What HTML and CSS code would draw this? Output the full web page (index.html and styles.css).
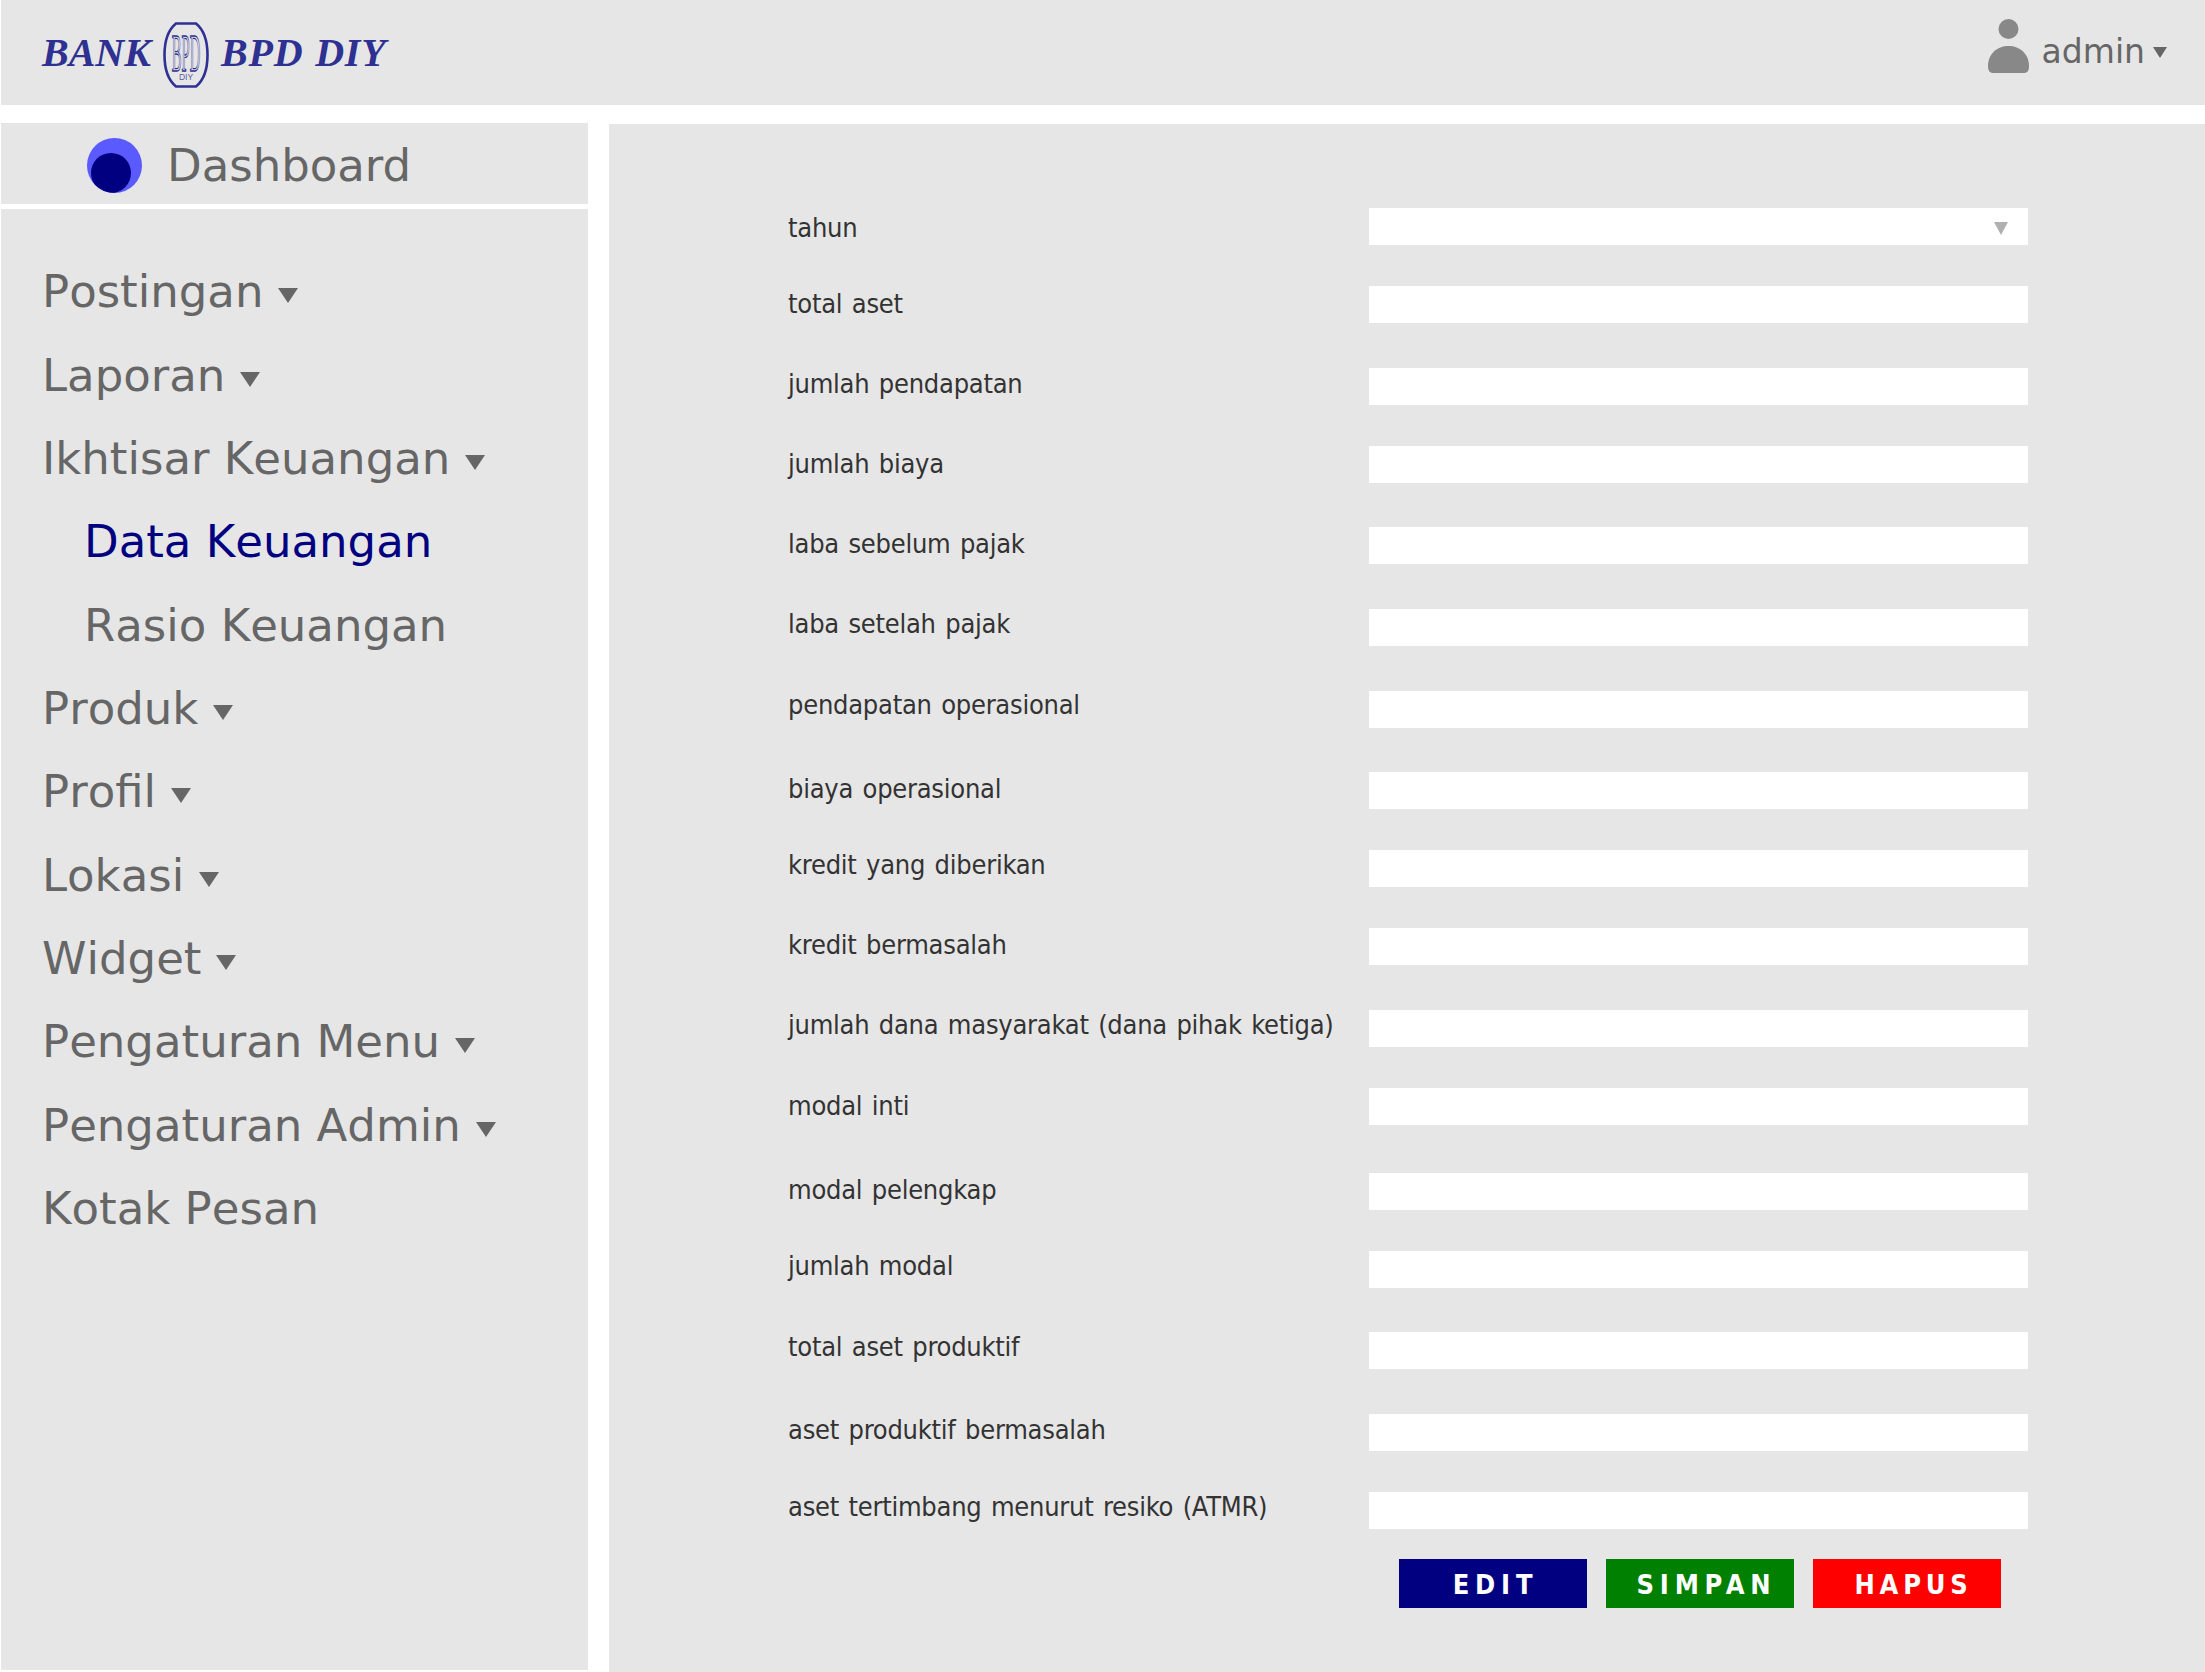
FILE: index.html
```html
<!DOCTYPE html>
<html lang="en">
<head>
  <meta charset="UTF-8">
  <title>Data Keuangan</title>
  <link rel="stylesheet" href="styles.css">
</head>
<body>
  <header class="topbar">
    <div class="logo">
      <span class="logo-word">BANK</span>
      <svg class="logo-mark" viewBox="0 0 46 66" width="46" height="66">
        <path d="M13 1.5 H33 C41 8 44.5 20 44.5 33 C44.5 46 41 58 33 64.5 H13 C5 58 1.5 46 1.5 33 C1.5 20 5 8 13 1.5 Z" fill="none" stroke="#2e3192" stroke-width="2.6"/>
        <text transform="translate(23 49) scale(.28 1)" text-anchor="middle" font-family="Liberation Serif" font-size="52" fill="none" stroke="#2e3192" stroke-width="1" vector-effect="non-scaling-stroke">BPD</text>
        <text x="23" y="58" text-anchor="middle" font-family="Liberation Sans" font-size="8.5" fill="#5a5ca8">DIY</text>
      </svg>
      <span class="logo-word logo-name">BPD DIY</span>
    </div>
    <div class="user">
      <svg class="user-icon" viewBox="0 0 41 54" width="41" height="54">
        <circle cx="20.5" cy="10" r="10" fill="#888"/>
        <path d="M0 47 C0 35 9 27 20.5 27 C32 27 41 35 41 47 C41 52 39 54 36 54 H5 C2 54 0 52 0 47 Z" fill="#888"/>
      </svg>
      <span class="user-name">admin</span>
      <span class="caret caret-user"></span>
    </div>
  </header>

  <div class="layout">
    <aside class="sidebar">
      <div class="dash">
        <span class="dash-dot"><span class="dash-dot-inner"></span></span>
        <span>Dashboard</span>
      </div>
      <nav class="menu">
        <ul>
          <li><a href="#">Postingan</a><span class="caret"></span></li>
          <li><a href="#">Laporan</a><span class="caret"></span></li>
          <li><a href="#">Ikhtisar Keuangan</a><span class="caret"></span></li>
          <li class="sub active"><a href="#">Data Keuangan</a></li>
          <li class="sub"><a href="#">Rasio Keuangan</a></li>
          <li><a href="#">Produk</a><span class="caret"></span></li>
          <li><a href="#">Profil</a><span class="caret"></span></li>
          <li><a href="#">Lokasi</a><span class="caret"></span></li>
          <li><a href="#">Widget</a><span class="caret"></span></li>
          <li><a href="#">Pengaturan Menu</a><span class="caret"></span></li>
          <li><a href="#">Pengaturan Admin</a><span class="caret"></span></li>
          <li><a href="#">Kotak Pesan</a></li>
        </ul>
      </nav>
    </aside>

    <main class="content">
      <form class="finance-form">
        <div class="row"><label>tahun</label><div class="select-box"><span class="select-arrow"></span></div></div>
        <div class="row"><label>total aset</label><input type="text"></div>
        <div class="row"><label>jumlah pendapatan</label><input type="text"></div>
        <div class="row"><label>jumlah biaya</label><input type="text"></div>
        <div class="row"><label>laba sebelum pajak</label><input type="text"></div>
        <div class="row"><label>laba setelah pajak</label><input type="text"></div>
        <div class="row"><label>pendapatan operasional</label><input type="text"></div>
        <div class="row"><label>biaya operasional</label><input type="text"></div>
        <div class="row"><label>kredit yang diberikan</label><input type="text"></div>
        <div class="row"><label>kredit bermasalah</label><input type="text"></div>
        <div class="row"><label>jumlah dana masyarakat (dana pihak ketiga)</label><input type="text"></div>
        <div class="row"><label>modal inti</label><input type="text"></div>
        <div class="row"><label>modal pelengkap</label><input type="text"></div>
        <div class="row"><label>jumlah modal</label><input type="text"></div>
        <div class="row"><label>total aset produktif</label><input type="text"></div>
        <div class="row"><label>aset produktif bermasalah</label><input type="text"></div>
        <div class="row"><label>aset tertimbang menurut resiko (ATMR)</label><input type="text"></div>
        <div class="actions">
          <button type="button" class="btn btn-edit">EDIT</button>
          <button type="button" class="btn btn-save">SIMPAN</button>
          <button type="button" class="btn btn-delete">HAPUS</button>
        </div>
      </form>
    </main>
  </div>
</body>
</html>
```
FILE: styles.css
```css
* {
  box-sizing: border-box;
}

html, body {
  margin: 0;
  padding: 0;
  background-color: #fff;
}

body {
  width: 2205px;
  height: 1672px;
  overflow: hidden;
  font-family: "DejaVu Sans", sans-serif;
  color: #666;
}

.topbar {
  height: 105px;
  margin-left: 1px;
  background-color: #e6e6e6;
  display: flex;
  align-items: center;
  justify-content: space-between;
  padding: 0 38px 0 41px;
}

.logo {
  display: flex;
  align-items: center;
  gap: 12px;
}

.logo-word {
  font-family: "Liberation Serif", serif;
  font-weight: bold;
  font-style: italic;
  font-size: 40px;
  color: #2e3192;
  white-space: nowrap;
}

.logo-name {
  letter-spacing: 0.8px;
  word-spacing: 1px;
}

.logo-mark {
  display: block;
  margin-top: 5px;
}

.user {
  display: flex;
  align-items: center;
}

.user-icon {
  display: block;
  margin-right: 13px;
  margin-bottom: 13px;
}

.user-name {
  font-size: 33px;
  margin-right: 8px;
  margin-bottom: 3px;
}

.caret {
  display: inline-block;
  width: 0;
  height: 0;
  margin-left: 15px;
  border-left: 10px solid transparent;
  border-right: 10px solid transparent;
  border-top: 15px solid #666;
}

.caret-user {
  margin-left: 0;
  border-left-width: 7.5px;
  border-right-width: 7.5px;
  border-top-width: 11px;
}

.layout {
  display: flex;
  margin-top: 18px;
  margin-left: 1px;
  gap: 21px;
}

.sidebar {
  width: 587px;
  flex: none;
}

.dash {
  height: 81px;
  background-color: #e6e6e6;
  display: flex;
  align-items: center;
  gap: 25px;
  padding: 4px 0 0 86px;
  font-size: 45px;
}

.dash-dot {
  position: relative;
  width: 55px;
  height: 55px;
  border-radius: 50%;
  background-color: #5a5aff;
  overflow: hidden;
}

.dash-dot-inner {
  position: absolute;
  left: 4px;
  bottom: 0;
  width: 40px;
  height: 40px;
  border-radius: 50%;
  background-color: #000080;
}

.menu {
  height: 1461px;
  margin-top: 5px;
  background-color: #e6e6e6;
  padding: 41px 0 0 41px;
}

.menu ul {
  list-style-type: none;
  margin: 0;
  padding: 0;
}

.menu li {
  height: 83.35px;
  display: flex;
  align-items: center;
  font-size: 45px;
  font-kerning: none;
}

.menu li a {
  color: #666;
  text-decoration: none;
}

.menu li .caret {
  margin-top: 8px;
}

.menu li.sub {
  padding-left: 42px;
}

.menu li.active a {
  color: #000080;
}

.content {
  width: 1596px;
  height: 1548px;
  margin-top: 1px;
  background-color: #e6e6e6;
  color: #333;
  padding: 84px 0 0 179px;
}

/* rows are not evenly spaced in the design */
.row {
  display: flex;
  align-items: flex-start;
  height: 78px;
}

.row:nth-child(2),
.row:nth-child(5),
.row:nth-child(6),
.row:nth-child(10),
.row:nth-child(15) {
  height: 82px;
}

.row:nth-child(4),
.row:nth-child(7),
.row:nth-child(14) {
  height: 81px;
}

.row:nth-child(12) {
  height: 85px;
}

.row:nth-child(17) {
  height: 67px;
}

.row label {
  width: 581px;
  margin-top: -2px;
  font-family: "DejaVu Sans Condensed", "DejaVu Sans", sans-serif;
  font-size: 27px;
  line-height: 37px;
  letter-spacing: -0.25px;
  word-spacing: 2px;
}

.row:nth-child(1) label {
  margin-top: 1px;
}

.row:nth-child(2) label,
.row:nth-child(4) label,
.row:nth-child(12) label {
  margin-top: -1px;
}

.row:nth-child(3) label,
.row:nth-child(16) label {
  margin-top: -3px;
}

.row:nth-child(6) label,
.row:nth-child(9) label,
.row:nth-child(11) label,
.row:nth-child(14) label,
.row:nth-child(15) label,
.row:nth-child(17) label {
  margin-top: -4px;
}

.row:nth-child(7) label {
  margin-top: -5px;
}

.row input,
.select-box {
  width: 659px;
  height: 37px;
  padding: 0;
  border: none;
  background-color: #fff;
  position: relative;
}

.select-arrow {
  position: absolute;
  right: 20px;
  top: 14px;
  width: 0;
  height: 0;
  border-left: 7px solid transparent;
  border-right: 7px solid transparent;
  border-top: 13px solid #b0b0b0;
}

.actions {
  display: flex;
  gap: 19px;
  margin-left: 611px;
}

.btn {
  width: 188px;
  height: 49px;
  padding: 2px 0 0 5px;
  border: none;
  color: #fff;
  font-family: "DejaVu Sans Condensed", "DejaVu Sans", sans-serif;
  font-weight: bold;
  font-size: 27px;
  letter-spacing: 5.8px;
  cursor: pointer;
}

.btn-edit {
  background-color: #000080;
}

.btn-save {
  background-color: #008000;
  padding-left: 13px;
}

.btn-delete {
  background-color: #f00;
  padding-left: 13px;
  letter-spacing: 4.8px;
}
```
